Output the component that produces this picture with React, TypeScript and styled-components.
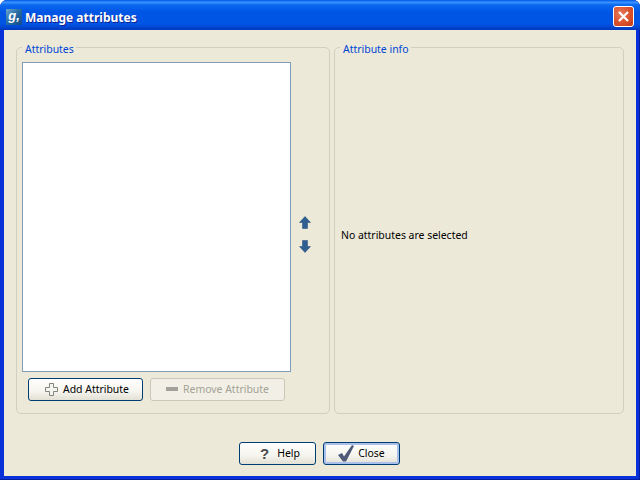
import styled, { createGlobalStyle } from 'styled-components'

const Global = createGlobalStyle`
  html, body {
    margin: 0;
    padding: 0;
    background: #fff;
  }
  #root {
    width: 640px;
    height: 480px;
  }
`

const Window = styled.div`
  width: 640px;
  height: 480px;
  box-sizing: border-box;
  display: flex;
  flex-direction: column;
  background: #0831d9;
  border-radius: 7px 7px 0 0;
  box-shadow: inset 0 -1px 0 #001ea0, inset -1px 0 0 #001ea0;
  font-family: 'Noto Sans', 'Liberation Sans', Arial, sans-serif;
  font-size: 10.45px;
  color: #000;
  overflow: hidden;
`

const TitleBar = styled.div`
  height: 30px;
  flex: none;
  box-sizing: border-box;
  padding: 4px 6px 0 6px;
  display: flex;
  align-items: center;
  gap: 3px;
  background: linear-gradient(
    180deg,
    #0058e6 0%,
    #3a93ff 8%,
    #0a6af0 16%,
    #0055e5 40%,
    #0055e5 78%,
    #0148d4 90%,
    #0038b8 100%
  );
`

const Title = styled.span`
  font-weight: bold;
  font-size: 12px;
  color: #fff;
  text-shadow: 1px 1px 0 #0f1f8f;
  flex: 1;
`

const AppIcon = styled.div`
  width: 16px;
  height: 16px;
  flex: none;
  box-sizing: border-box;
  border-radius: 1px;
  background: linear-gradient(135deg, #6fa6cc 0%, #2a6ea6 45%, #0f4a88 100%);
  display: flex;
  align-items: center;
  justify-content: center;
  padding-bottom: 3px;
  color: #fff;
  font-family: 'Liberation Sans', Arial, sans-serif;
  font-size: 13px;
  font-weight: bold;
  font-style: italic;
  line-height: 16px;
`

const CloseBox = styled.div`
  width: 21px;
  height: 21px;
  box-sizing: border-box;
  flex: none;
  margin-bottom: 1px;
  border: 1px solid #fff;
  border-radius: 3px;
  background: radial-gradient(circle at 35% 35%, #e8795a 0%, #d9512c 55%, #c13a14 100%);
  display: flex;
  align-items: center;
  justify-content: center;
`

const Body = styled.div`
  flex: 1;
  min-height: 0;
  margin: 0 4px 4px 4px;
  background: #ece9d8;
  display: flex;
  flex-direction: column;
  padding: 9px 12px 0 12px;
`

const Groups = styled.div`
  display: flex;
  gap: 4px;
  flex: none;
`

const Group = styled.fieldset<{ $width: number }>`
  width: ${(p) => p.$width}px;
  height: 375px;
  flex: none;
  box-sizing: border-box;
  margin: 0;
  padding: 0;
  border: 1px solid #d0d0bf;
  border-radius: 5px;
  display: flex;
  min-width: 0;
`

const Legend = styled.legend`
  margin-left: 5px;
  padding: 4px 2px 0 3px;
  color: #0046d5;
  line-height: 13px;
`

const LeftInner = styled.div`
  display: flex;
  flex-direction: column;
  padding: 6px 0 0 5px;
`

const ListRow = styled.div`
  display: flex;
`

const ListBox = styled.div`
  width: 269px;
  height: 310px;
  box-sizing: border-box;
  background: #fff;
  border: 1px solid #7f9db9;
`

const Arrows = styled.div`
  width: 28px;
  display: flex;
  flex-direction: column;
  align-items: center;
  justify-content: center;
  gap: 11px;
  padding-top: 34px;
`

const ListButtons = styled.div`
  display: flex;
  gap: 7px;
  margin: 6px 0 0 6px;
`

const Button = styled.div<{
  $width: number
  $disabled?: boolean
  $default?: boolean
  $gap?: number
  $shift?: number
}>`
  width: ${(p) => p.$width}px;
  height: 23px;
  box-sizing: border-box;
  display: flex;
  align-items: center;
  justify-content: center;
  gap: ${(p) => p.$gap ?? 5}px;
  padding: 0 0 1px ${(p) => p.$shift ?? 0}px;
  border-radius: 3px;
  border: 1px solid ${(p) => (p.$disabled ? '#c9c7ba' : '#003c74')};
  background: ${(p) =>
    p.$disabled ? '#f2f0e6' : 'linear-gradient(180deg, #ffffff 0%, #f5f4ee 60%, #e3e0d4 100%)'};
  color: ${(p) => (p.$disabled ? '#a3a295' : '#000')};
  box-shadow: ${(p) => (p.$default ? 'inset 0 0 0 2px #a9c0ea' : 'none')};
`

const InfoInner = styled.div`
  flex: 1;
  display: flex;
  align-items: center;
  padding: 1px 0 0 6px;
`

const Footer = styled.div`
  display: flex;
  justify-content: center;
  gap: 7px;
  margin-top: 28px;
  padding-right: 1px;
`

const HelpMark = styled.span`
  font-family: 'Liberation Sans', Arial, sans-serif;
  font-weight: bold;
  font-size: 15px;
  line-height: 15px;
  color: #4a4a4a;
`

const UpArrow = () => (
  <svg width="12" height="13" viewBox="0 0 12 13">
    <path d="M6 0.5 L11.5 6.5 L8.5 6.5 L8.5 12.5 L3.5 12.5 L3.5 6.5 L0.5 6.5 Z" fill="#2f5f92" stroke="#1f4470" strokeWidth="0.5" />
  </svg>
)

const DownArrow = () => (
  <svg width="12" height="13" viewBox="0 0 12 13">
    <path d="M3.5 0.5 L8.5 0.5 L8.5 6.5 L11.5 6.5 L6 12.5 L0.5 6.5 L3.5 6.5 Z" fill="#2f5f92" stroke="#1f4470" strokeWidth="0.5" />
  </svg>
)

export default function App() {
  return (
    <Window>
      <Global />
      <TitleBar>
        <AppIcon>g,</AppIcon>
        <Title>Manage attributes</Title>
        <CloseBox>
          <svg width="13" height="13" viewBox="0 0 13 13">
            <path d="M2 2 L11 11 M11 2 L2 11" stroke="#fff" strokeWidth="2.2" />
          </svg>
        </CloseBox>
      </TitleBar>
      <Body>
        <Groups>
          <Group $width={314}>
            <Legend>Attributes</Legend>
            <LeftInner>
              <ListRow>
                <ListBox />
                <Arrows>
                  <UpArrow />
                  <DownArrow />
                </Arrows>
              </ListRow>
              <ListButtons>
                <Button $width={115} $shift={3}>
                  <svg width="13" height="13" viewBox="0 0 13 13">
                    <path d="M4.5 0.5 H8.5 V4.5 H12.5 V8.5 H8.5 V12.5 H4.5 V8.5 H0.5 V4.5 H4.5 Z" fill="#f4f4f0" stroke="#85857d" />
                  </svg>
                  Add Attribute
                </Button>
                <Button $width={135} $disabled>
                  <svg width="12" height="4" viewBox="0 0 12 4">
                    <rect width="12" height="4" fill="#a3a29a" />
                  </svg>
                  Remove Attribute
                </Button>
              </ListButtons>
            </LeftInner>
          </Group>
          <Group $width={290}>
            <Legend>Attribute info</Legend>
            <InfoInner>No attributes are selected</InfoInner>
          </Group>
        </Groups>
        <Footer>
          <Button $width={77} $gap={8} $shift={5}>
            <HelpMark>?</HelpMark>
            Help
          </Button>
          <Button $width={77} $default $gap={4}>
            <svg width="16" height="17" viewBox="0 0 16 17">
              <path d="M0 10 L4 8 L6 11.5 L14 0 L16 1 L8 16.5 L5 16.5 Z" fill="#4e5a78" />
            </svg>
            Close
          </Button>
        </Footer>
      </Body>
    </Window>
  )
}
